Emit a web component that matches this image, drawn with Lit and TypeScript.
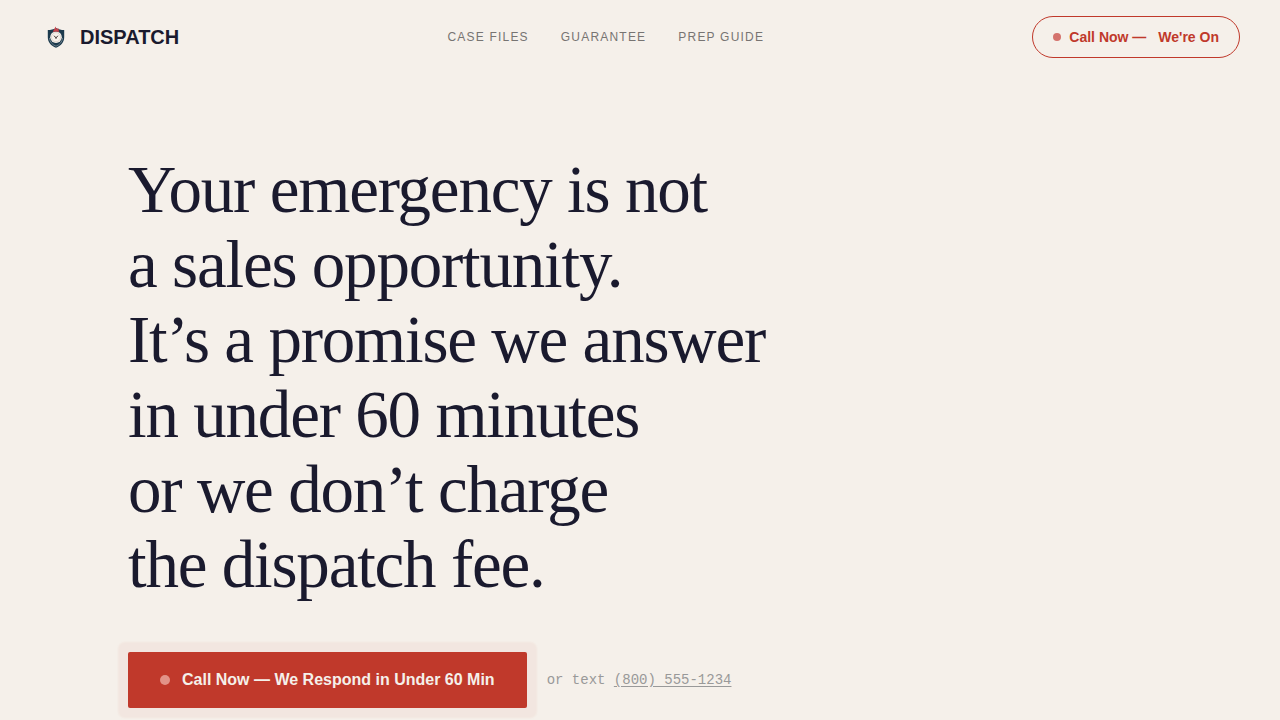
import { LitElement, html, css } from "lit";
import { customElement } from "lit/decorators.js";

@customElement("dispatch-logo")
export class DispatchLogo extends LitElement {
  static styles = css`
    :host { display: block; width: 32px; height: 32px; }
    svg { display: block; width: 100%; height: 100%; }
  `;
  render() {
    return html`
      <svg viewBox="0 0 32 32" aria-hidden="true">
        <path d="M16 7 C13.4 8.4 10.8 9 7.8 9 V16 C7.8 21.4 11.2 25 16 26.8 C20.8 25 24.2 21.4 24.2 16 V9 C21.2 9 18.6 8.4 16 7Z" fill="#1c3a4d"/>
        <path d="M9.4 17 C9.8 21.1 12.4 23.8 16 25.2 C19.6 23.8 22.2 21.1 22.6 17" fill="none" stroke="#8b9ba3" stroke-width=".7"/>
        <circle cx="16" cy="16.2" r="5.8" fill="#f7f1eb"/>
        <circle cx="16" cy="16.2" r="4.6" fill="none" stroke="#c5bbb3" stroke-width=".5"/>
        <path d="M13.8 14.8 L16 16.6 L18.2 14.8" fill="none" stroke="#463c3c" stroke-width=".9"/>
        <circle cx="16" cy="16.8" r=".9" fill="#463c3c"/>
        <path d="M13.2 11 C13.2 9.6 13.8 8.7 14.4 8.3 L15.4 5.4 L16.6 8 L18.4 7 C18.2 8.7 19.2 9.5 18.8 11 C17 10.2 15 10.2 13.2 11Z" fill="#c8444c"/>
      </svg>`;
  }
}

@customElement("app-root")
export class AppRoot extends LitElement {
  static styles = css`
    :host {
      display: block;
      min-height: 100vh;
      background: #f5f0ea;
      color: #1a1a2e;
      font-family: "Liberation Sans", Arial, sans-serif;
    }
    * { box-sizing: border-box; }
    a { text-decoration: none; }
    .bar {
      display: flex;
      align-items: center;
      justify-content: space-between;
      padding: 16px 40px;
    }
    .brand {
      display: flex;
      align-items: center;
      gap: 8px;
      color: inherit;
      font-size: 20px;
      font-weight: 700;
    }
    .links { display: flex; gap: 32px; }
    .links a {
      color: #777472;
      font-size: 12px;
      letter-spacing: 0.1em;
      text-transform: uppercase;
    }
    button { font-family: inherit; font-weight: 700; cursor: pointer; }
    .dot { flex: none; border-radius: 50%; }
    .call {
      display: flex;
      align-items: center;
      gap: 8px;
      height: 42px;
      padding: 0 20px;
      border: 1px solid #c0392b;
      border-radius: 21px;
      background: transparent;
      color: #c0392b;
      font-size: 14px;
    }
    .call .dot { width: 8px; height: 8px; background: #d4736d; }
    .status { padding-left: 4px; }
    .hero { padding: 78px 128px 80px; }
    h1 {
      margin: 0 0 50px;
      font-family: "Liberation Serif", "Times New Roman", serif;
      font-size: 67px;
      font-weight: 400;
      line-height: 75px;
      letter-spacing: -0.018em;
    }
    .actions { display: flex; align-items: center; gap: 20px; }
    .cta {
      display: flex;
      align-items: center;
      gap: 12px;
      height: 56px;
      padding: 0 32px;
      border: 0;
      border-radius: 2px;
      background: #c0392b;
      box-shadow: 0 0 2px 10px rgba(192, 57, 43, 0.05);
      color: #f5f0ea;
      font-size: 16px;
    }
    .cta .dot { width: 10px; height: 10px; background: #e29388; }
    .text-us {
      color: #999;
      font-family: "Liberation Mono", "Courier New", monospace;
      font-size: 14px;
    }
    .text-us a { color: inherit; text-decoration: underline; text-underline-offset: 2px; }
  `;

  render() {
    return html`
      <header class="bar">
        <a class="brand" href="#"><dispatch-logo></dispatch-logo><span>DISPATCH</span></a>
        <nav class="links">
          <a href="#cases">Case Files</a>
          <a href="#guarantee">Guarantee</a>
          <a href="#prep">Prep Guide</a>
        </nav>
        <button class="call" type="button">
          <span class="dot"></span><span>Call Now —</span><span class="status">We're On</span>
        </button>
      </header>
      <main class="hero">
        <h1>
          Your emergency is not<br />a sales opportunity.<br />It’s a promise we answer<br />in
          under 60 minutes<br />or we don’t charge<br />the dispatch fee.
        </h1>
        <div class="actions">
          <button class="cta" type="button">
            <span class="dot"></span><span>Call Now — We Respond in Under 60 Min</span>
          </button>
          <span class="text-us">or text <a href="sms:8005551234">(800) 555-1234</a></span>
        </div>
      </main>
    `;
  }
}
